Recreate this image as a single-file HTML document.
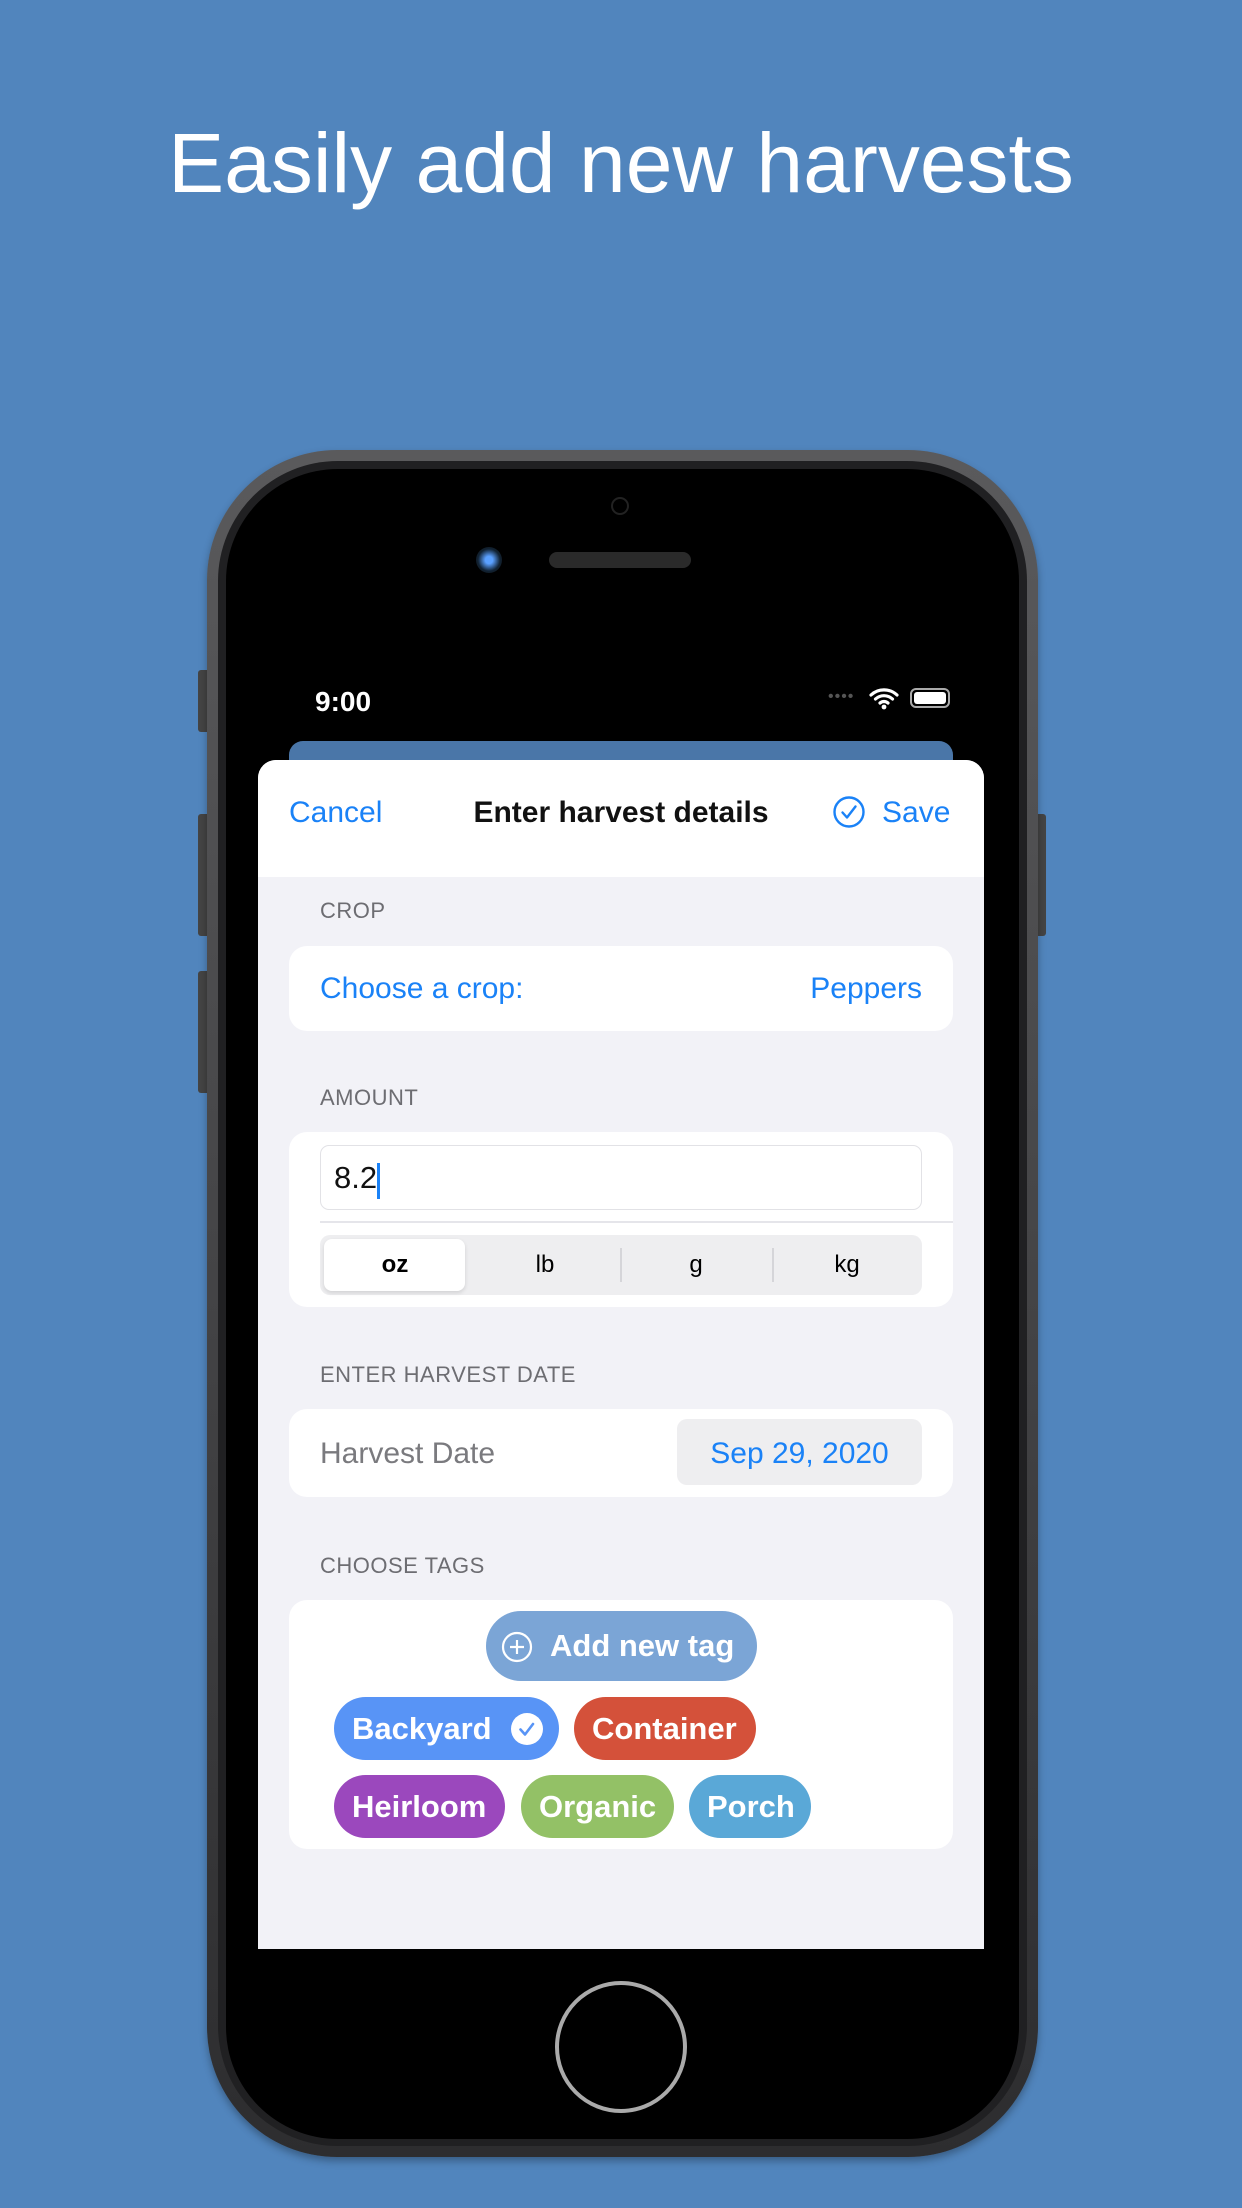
<!DOCTYPE html>
<html><head><meta charset="utf-8"><style>
*{margin:0;padding:0;box-sizing:border-box}
body{width:1242px;height:2208px;background:#5185bd;position:relative;overflow:hidden;font-family:"Liberation Sans",sans-serif}
.a{position:absolute}
.t{white-space:nowrap}
.blue{color:#1a82f7}
.lbl{position:absolute;left:320px;font-size:22px;color:#6d6d72;letter-spacing:.5px}
.card{position:absolute;left:289px;width:664px;background:#fff;border-radius:18px}
.tag{position:absolute;height:63px;border-radius:32px;color:#fff;font-size:31px;line-height:63px;padding-left:18px;font-weight:bold}
</style></head><body>
<div class="a t" style="left:0;width:1242px;top:115px;text-align:center;color:#fff;font-size:84px">Easily add new harvests</div>

<div class="a" style="left:198px;top:670px;width:12px;height:62px;background:#444;border-radius:3px"></div>
<div class="a" style="left:198px;top:814px;width:12px;height:122px;background:#444;border-radius:3px"></div>
<div class="a" style="left:198px;top:971px;width:12px;height:122px;background:#444;border-radius:3px"></div>
<div class="a" style="left:1034px;top:814px;width:12px;height:122px;background:#444;border-radius:3px"></div>

<div class="a" style="left:207px;top:450px;width:831px;height:1707px;border-radius:130px;background:linear-gradient(#5a5a5c,#2d2d2f);box-shadow:0 4px 8px rgba(0,0,0,.3)"></div>
<div class="a" style="left:218px;top:461px;width:809px;height:1685px;border-radius:120px;background:#202022"></div>
<div class="a" style="left:226px;top:469px;width:793px;height:1670px;border-radius:112px;background:#000"></div>
<div class="a" style="left:611px;top:497px;width:18px;height:18px;border-radius:50%;border:2px solid #222"></div>
<div class="a" style="left:476px;top:547px;width:26px;height:26px;border-radius:50%;background:radial-gradient(#5aa0ff 20%,#123 60%,#111)"></div>
<div class="a" style="left:549px;top:552px;width:142px;height:16px;border-radius:8px;background:#2a2a2a"></div>
<div class="a" style="left:555px;top:1981px;width:132px;height:132px;border-radius:50%;border:4px solid #aaa;background:#000"></div>

<div class="a" style="left:258px;top:656px;width:726px;height:1293px;background:#000;overflow:hidden">
  <div class="a t" style="left:57px;top:30px;color:#fff;font-size:28px;font-weight:bold">9:00</div>
  <div class="a t" style="left:570px;top:32px;color:#555;font-size:16px;letter-spacing:1px">••••</div>
  <svg class="a" style="left:611px;top:30px" width="30" height="24" viewBox="0 0 30 24"><path d="M2 9a19 19 0 0 1 26 0M6.5 13a12.5 12.5 0 0 1 17 0M11 17a6 6 0 0 1 8 0" stroke="#fff" stroke-width="3.2" fill="none" stroke-linecap="round"/><circle cx="15" cy="21" r="2.4" fill="#fff"/></svg>
  <div class="a" style="left:652px;top:32px;width:40px;height:20px;border:2px solid #aaa;border-radius:6px;padding:2px"><div style="width:100%;height:100%;background:#fff;border-radius:3px"></div></div>
  <div class="a" style="left:31px;top:85px;width:664px;height:40px;background:#4a76a8;border-radius:14px"></div>
  <div class="a" style="left:0;top:104px;width:726px;height:1200px;background:#f2f2f7;border-radius:18px 18px 0 0;overflow:hidden">
    <div class="a" style="left:0;top:0;width:726px;height:117px;background:#fff"></div>
    <div class="a t blue" style="left:31px;top:36px;font-size:30px">Cancel</div>
    <div class="a t" style="left:0;width:726px;text-align:center;top:36px;font-size:30px;font-weight:bold;color:#111">Enter harvest details</div>
    <svg class="a" style="left:574px;top:35px" width="34" height="34" viewBox="0 0 34 34"><circle cx="17" cy="17" r="14.5" fill="none" stroke="#1a82f7" stroke-width="2.4"/><path d="M10.5 17.5l4.5 5 8.5-11" fill="none" stroke="#1a82f7" stroke-width="2.4" stroke-linecap="round" stroke-linejoin="round"/></svg>
    <div class="a t blue" style="left:624px;top:36px;font-size:30px">Save</div>
  </div>
</div>
<div class="lbl t" style="top:898px">CROP</div>
<div class="card" style="top:946px;height:85px"></div>
<div class="a t blue" style="left:320px;top:972px;font-size:30px">Choose a crop:</div>
<div class="a t blue" style="left:700px;width:222px;text-align:right;top:972px;font-size:30px">Peppers</div>

<div class="lbl t" style="top:1085px">AMOUNT</div>
<div class="card" style="top:1132px;height:175px"></div>
<div class="a" style="left:320px;top:1145px;width:602px;height:65px;border:1.5px solid #e2e2e6;border-radius:9px"></div>
<div class="a t" style="left:334px;top:1160px;font-size:31px;color:#111">8.2</div>
<div class="a" style="left:377px;top:1163px;width:3px;height:36px;background:#1a82f7"></div>
<div class="a" style="left:320px;top:1221px;width:633px;height:1.5px;background:#e5e5ea"></div>
<div class="a" style="left:320px;top:1235px;width:602px;height:60px;background:#eeeef0;border-radius:10px"></div>
<div class="a" style="left:324px;top:1239px;width:141px;height:52px;background:#fff;border-radius:8px;box-shadow:0 2px 4px rgba(0,0,0,.12)"></div>
<div class="a" style="left:620px;top:1248px;width:1.5px;height:34px;background:#d5d5d9"></div>
<div class="a" style="left:772px;top:1248px;width:1.5px;height:34px;background:#d5d5d9"></div>
<div class="a t" style="left:320px;width:150px;text-align:center;top:1251px;font-size:24px;font-weight:bold">oz</div>
<div class="a t" style="left:470px;width:150px;text-align:center;top:1251px;font-size:24px">lb</div>
<div class="a t" style="left:621px;width:150px;text-align:center;top:1251px;font-size:24px">g</div>
<div class="a t" style="left:772px;width:150px;text-align:center;top:1251px;font-size:24px">kg</div>

<div class="lbl t" style="top:1362px">ENTER HARVEST DATE</div>
<div class="card" style="top:1409px;height:88px"></div>
<div class="a t" style="left:320px;top:1437px;font-size:30px;color:#7a7a7e">Harvest Date</div>
<div class="a" style="left:677px;top:1419px;width:245px;height:66px;background:#eeeef0;border-radius:10px"></div>
<div class="a t blue" style="left:677px;width:245px;text-align:center;top:1437px;font-size:30px">Sep 29, 2020</div>

<div class="lbl t" style="top:1553px">CHOOSE TAGS</div>
<div class="card" style="top:1600px;height:249px"></div>
<div class="tag" style="left:486px;top:1611px;width:271px;height:70px;line-height:70px;background:#7ba5d6;padding-left:64px;border-radius:35px">Add new tag</div>
<svg class="a" style="left:501px;top:1631px" width="32" height="32" viewBox="0 0 32 32"><circle cx="16" cy="16" r="14" fill="none" stroke="#fff" stroke-width="2.2"/><path d="M16 9v14M9 16h14" stroke="#fff" stroke-width="2.2"/></svg>
<div class="tag" style="left:334px;top:1697px;width:225px;background:#5894f6">Backyard</div>
<svg class="a" style="left:510px;top:1712px" width="34" height="34" viewBox="0 0 34 34"><circle cx="17" cy="17" r="16" fill="#fff"/><path d="M10.5 17.5l4.5 5 8-10.5" fill="none" stroke="#5894f6" stroke-width="2.6" stroke-linecap="round" stroke-linejoin="round"/></svg>
<div class="tag" style="left:574px;top:1697px;width:182px;background:#d4513a">Container</div>
<div class="tag" style="left:334px;top:1775px;width:171px;background:#9b48bd">Heirloom</div>
<div class="tag" style="left:521px;top:1775px;width:153px;background:#93c166">Organic</div>
<div class="tag" style="left:689px;top:1775px;width:122px;background:#5aa8d7">Porch</div>
</body></html>
